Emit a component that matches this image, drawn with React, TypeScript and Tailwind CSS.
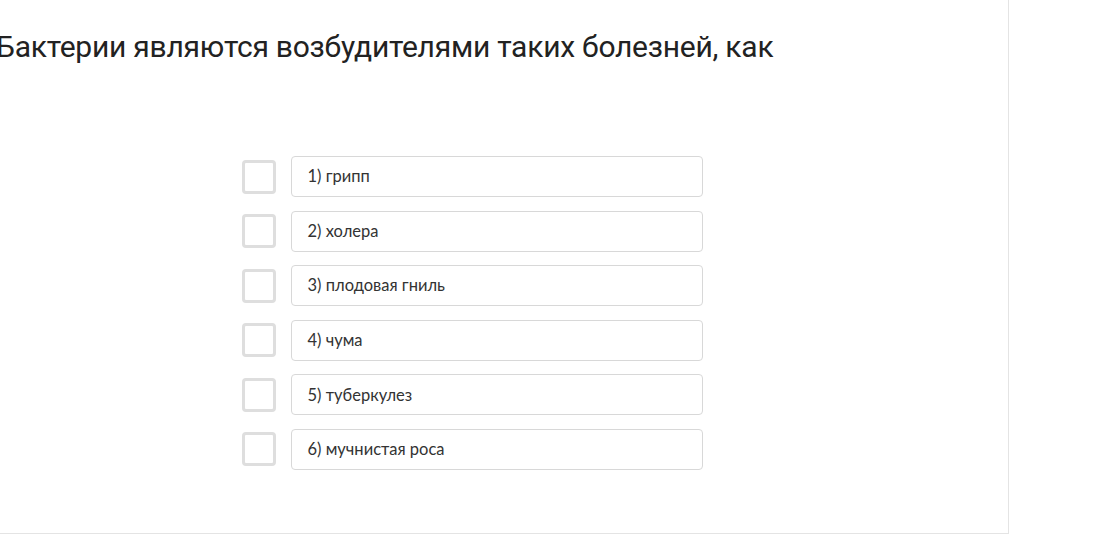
import React from "react";

const options = [
  "1) грипп",
  "2) холера",
  "3) плодовая гниль",
  "4) чума",
  "5) туберкулез",
  "6) мучнистая роса",
];

const OptionRow = ({ label }: { label: string }) => {
  return (
    <div className="flex items-center gap-[15px]">
      <div className="h-[34px] w-[34px] shrink-0 rounded-[4px] border-[3px] border-[#dedede] bg-white" />
      <div className="flex h-[41px] w-[412px] items-center rounded-[4px] border border-[#d8d8d8] bg-white pl-4 font-['Lato',sans-serif] text-[16.5px] text-[#333]">
        {label}
      </div>
    </div>
  );
};

export default function App() {
  return (
    <div className="h-[549px] w-full overflow-hidden bg-white">
      <div className="ml-[-64px] flex h-[534px] w-[1073px] flex-col border-r border-b border-[#e4e4e4] bg-white">
        <h2 className="mt-[29px] pl-[60px] font-['Roboto',sans-serif] text-[30px] leading-[36px] font-normal tracking-[-0.25px] whitespace-nowrap text-[#222]">
          Бактерии являются возбудителями таких болезней, как
        </h2>
        <div className="mt-[91px] flex flex-col items-center gap-[13.6px]">
          {options.map((o) => (
            <OptionRow key={o} label={o} />
          ))}
        </div>
      </div>
    </div>
  );
}
